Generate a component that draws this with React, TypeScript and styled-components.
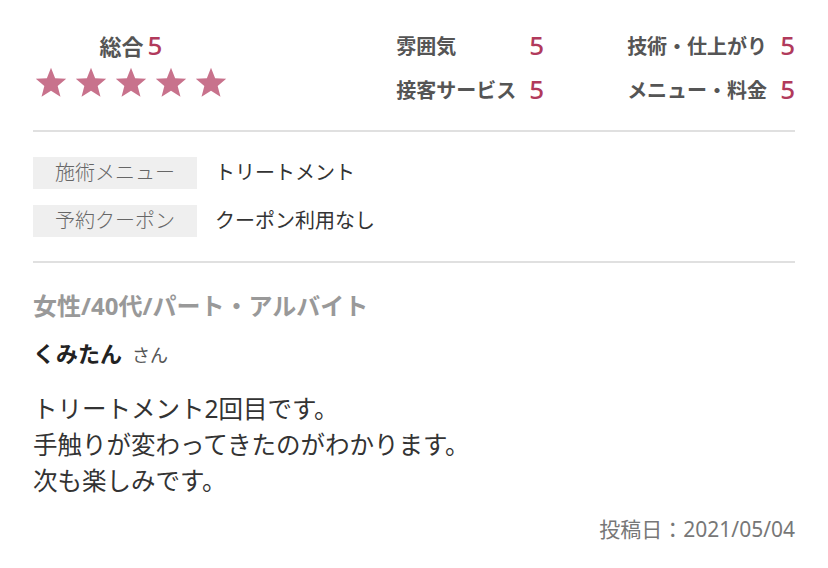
import React from 'react';
import styled, { createGlobalStyle } from 'styled-components';

const GlobalStyle = createGlobalStyle`
  body {
    margin: 0;
    background: #fff;
    font-family: "Noto Sans", "Noto Sans CJK JP", sans-serif;
  }
`;

const color = {
  accent: '#b13a5c',
  star: '#c8728c',
  rule: '#e0e0e0',
  tag: '#efefef',
};

const SPage = styled.div`
  width: 762px;
  padding: 0 33px;
`;

const STop = styled.div`
  display: flex;
  align-items: flex-start;
  justify-content: space-between;
  padding: 23px 0 19px 2px;
`;

const SOverall = styled.div`
  display: flex;
  flex-direction: column;
  align-items: center;
  margin-top: 7px;
  gap: 7px;
`;

const SOverallTitle = styled.div`
  display: flex;
  align-items: baseline;
  height: 30px;
  line-height: 30px;
  font-size: 22px;
  font-weight: 700;
  color: #555;

  span {
    margin-left: 4px;
    font-size: 26px;
    font-weight: 500;
    color: ${color.accent};
  }
`;

const SStars = styled.div`
  display: flex;
  gap: 8px;
`;

const SMetrics = styled.div`
  display: grid;
  grid-template-columns: auto auto auto auto;
  grid-auto-rows: 44px;
  column-gap: 13px;
  align-items: center;
`;

const SMetricName = styled.div<{ $indent?: boolean }>`
  font-size: 20px;
  font-weight: 700;
  color: #555;
  white-space: nowrap;
  padding-left: ${({ $indent }) => ($indent ? '70px' : '0')};
`;

const SMetricValue = styled.div`
  font-size: 26px;
  font-weight: 500;
  color: ${color.accent};
  line-height: 1;
`;

const SRule = styled.hr`
  margin: 0;
  border: none;
  height: 2px;
  background: ${color.rule};
`;

const SDetails = styled.div`
  display: flex;
  flex-direction: column;
  gap: 16px;
  padding: 25px 0 24px;
`;

const SDetailRow = styled.div`
  display: flex;
  align-items: center;
  gap: 18px;
`;

const STag = styled.div`
  width: 164px;
  height: 32px;
  line-height: 32px;
  background: ${color.tag};
  text-align: center;
  font-size: 20px;
  font-weight: 300;
  color: #666;
`;

const SDetailValue = styled.div`
  font-size: 20px;
  color: #333;
  margin-top: -4px;
`;

const SReview = styled.div`
  padding-top: 28px;
`;

const SProfile = styled.div`
  font-size: 24px;
  line-height: 30px;
  font-weight: 700;
  color: #999;
`;

const SName = styled.div`
  margin-top: 17px;
  line-height: 30px;
  font-size: 22px;
  font-weight: 700;
  color: #222;

  span {
    margin-left: 10px;
    font-size: 18px;
    font-weight: 400;
    color: #555;
  }
`;

const SBody = styled.p`
  margin: 21px 0 0;
  font-size: 24.5px;
  line-height: 36px;
  color: #333;
`;

const SDate = styled.div`
  margin-top: 15px;
  text-align: right;
  font-size: 21px;
  line-height: 30px;
  color: #777;
`;

const Star = () => (
  <svg width="32" height="32" viewBox="0 0 24 24">
    <polygon
      fill={color.star}
      points="12,0.6 15.1,8.4 23.4,8.9 17,14.2 19.1,22.4 12,17.9 4.9,22.4 7,14.2 0.6,8.9 8.9,8.4"
    />
  </svg>
);

const metrics = [
  ['雰囲気', '5', '技術・仕上がり', '5'],
  ['接客サービス', '5', 'メニュー・料金', '5'],
];

const details = [
  ['施術メニュー', 'トリートメント'],
  ['予約クーポン', 'クーポン利用なし'],
];

const App = () => (
  <SPage>
    <GlobalStyle />
    <STop>
      <SOverall>
        <SOverallTitle>
          総合<span>5</span>
        </SOverallTitle>
        <SStars>
          {[0, 1, 2, 3, 4].map((i) => (
            <Star key={i} />
          ))}
        </SStars>
      </SOverall>
      <SMetrics>
        {metrics.map(([a, av, b, bv]) => (
          <React.Fragment key={a}>
            <SMetricName>{a}</SMetricName>
            <SMetricValue>{av}</SMetricValue>
            <SMetricName $indent>{b}</SMetricName>
            <SMetricValue>{bv}</SMetricValue>
          </React.Fragment>
        ))}
      </SMetrics>
    </STop>
    <SRule />
    <SDetails>
      {details.map(([label, value]) => (
        <SDetailRow key={label}>
          <STag>{label}</STag>
          <SDetailValue>{value}</SDetailValue>
        </SDetailRow>
      ))}
    </SDetails>
    <SRule />
    <SReview>
      <SProfile>女性/40代/パート・アルバイト</SProfile>
      <SName>
        くみたん<span>さん</span>
      </SName>
      <SBody>
        トリートメント2回目です。
        <br />
        手触りが変わってきたのがわかります。
        <br />
        次も楽しみです。
      </SBody>
      <SDate>投稿日：2021/05/04</SDate>
    </SReview>
  </SPage>
);

export default App;
